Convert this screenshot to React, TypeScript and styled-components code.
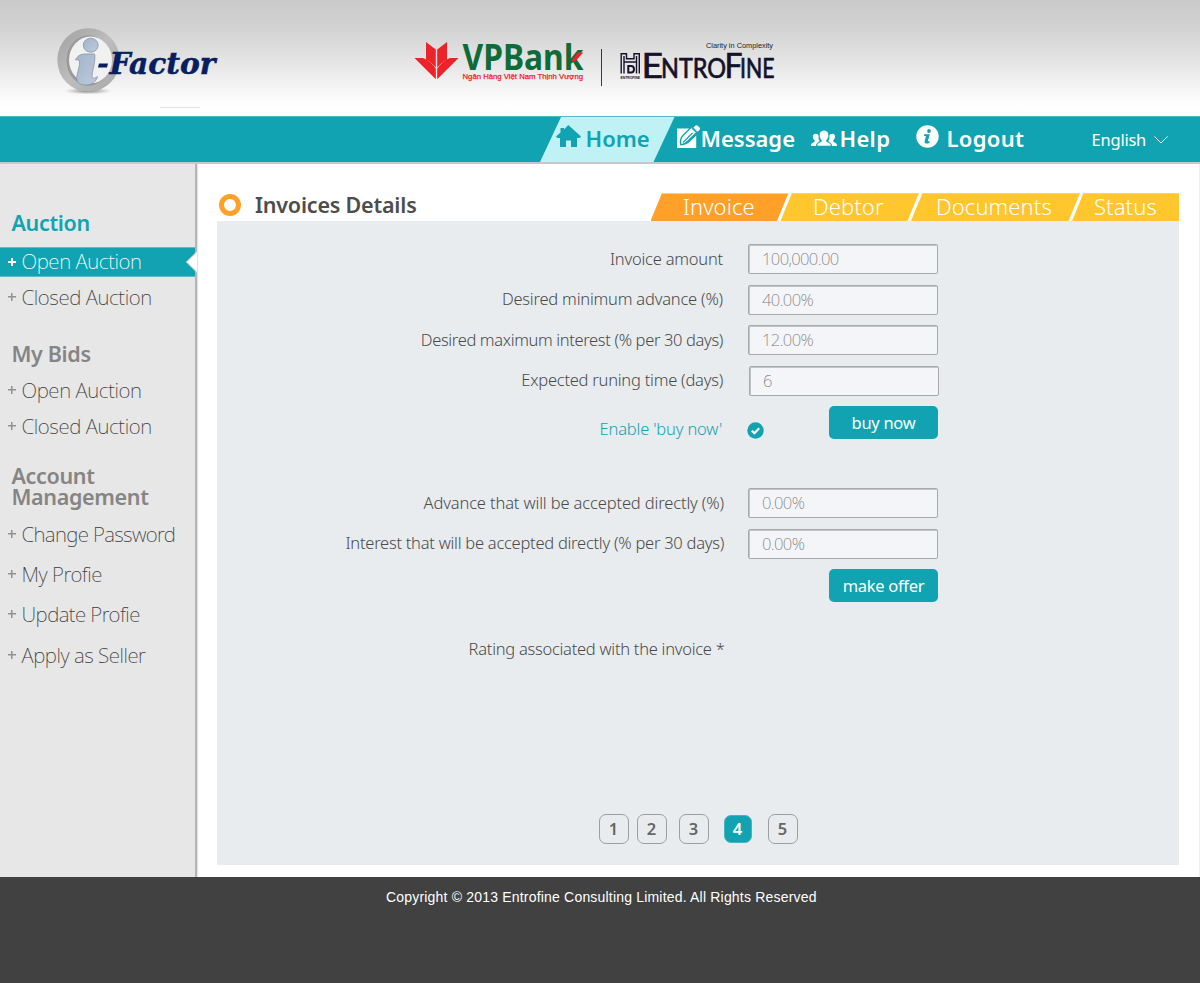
import React from 'react';
import styled, { createGlobalStyle, css } from 'styled-components';

const teal = '#11a3b1';
const thin = `'Noto Sans', 'Open Sans', sans-serif`;

const Global = createGlobalStyle`
  *, *::before, *::after { box-sizing: border-box; }
  body { margin: 0; background: #fff; font-family: ${thin}; }
`;

const Page = styled.div`
  display: flex;
  flex-direction: column;
  width: 1200px;
  height: 983px;
  overflow: hidden;
`;

/* ---------- header ---------- */

const Header = styled.header`
  display: flex;
  flex: none;
  height: 116px;
  padding-left: 50px;
  background: linear-gradient(#cacaca 0, #d3d3d3 30px, #ededed 76px, #fdfdfd 102px, #fff 116px);
  svg { display: block; flex: none; }
`;

const IFactorLogo = styled.svg`
  width: 180px;
  height: 116px;
  margin-right: 180px;
`;

const PartnerLogos = styled.svg`
  width: 380px;
  height: 116px;
`;

/* ---------- navigation ---------- */

const NavBar = styled.nav`
  display: flex;
  flex: none;
  height: 48px;
  padding-left: 540px;
  color: #fff;
  background: ${teal};
  border-top: 1px solid #4cbcc6;
  border-bottom: 2px solid #c6c6c6;
`;

const NavItem = styled.a<{ $w: number; $gap: number; $pad?: number; $ls?: number; $lift?: number; $active?: boolean }>`
  display: flex;
  align-items: center;
  width: ${p => p.$w}px;
  padding: 0 0 3px ${p => p.$pad || 0}px;
  gap: ${p => p.$gap}px;
  font-size: 22px;
  font-weight: 600;
  letter-spacing: ${p => p.$ls || 0}px;
  white-space: nowrap;
  svg { flex: none; margin-bottom: ${p => p.$lift || 0}px; }
  ${p => p.$active && css`
    color: ${teal};
    background: #bff1f5;
    clip-path: polygon(21px 0, 100% 0, calc(100% - 21px) 100%, 0 100%);
  `}
`;

const Language = styled.button`
  display: flex;
  align-items: center;
  gap: 8px;
  margin-left: auto;
  padding: 0 32px 1px 0;
  border: 0;
  background: none;
  color: #fff;
  font: 400 16.5px ${thin};
  letter-spacing: -0.25px;
  svg { margin-top: 2px; }
`;

/* ---------- body ---------- */

const Body = styled.div`
  display: flex;
  flex: none;
  height: 713px;
`;

const Sidebar = styled.aside`
  width: 197px;
  flex: none;
  background: #e7e7e7;
  border-right: 2px solid #b5b5b5;
  box-shadow: 1px 0 1px #e4e4e4;
`;

const Group = styled.section<{ $top: number }>`
  padding-top: ${p => p.$top}px;
`;

const GroupTitle = styled.h2<{ $active?: boolean; $gap: number }>`
  margin: 0 0 ${p => p.$gap}px 11.5px;
  color: ${p => (p.$active ? teal : '#858585')};
  font-size: 21.5px;
  line-height: 20.5px;
  font-weight: 600;
  letter-spacing: -0.35px;
`;

const MenuItem = styled.a<{ $h: number; $ls: number; $active?: boolean }>`
  display: flex;
  align-items: center;
  position: relative;
  height: ${p => p.$h}px;
  padding: 0 0 2px 8px;
  gap: 5.5px;
  color: ${p => (p.$active ? '#fff' : '#3c3c3c')};
  font-size: 20.5px;
  font-weight: 200;
  letter-spacing: ${p => p.$ls}px;
  white-space: nowrap;
  ${p => p.$active && css`
    background: ${teal};
    box-shadow: inset 0 1px #58c0c9, inset 0 -1px #58c0c9;
  `}
`;

const Plus = styled.i<{ $active?: boolean }>`
  width: 8px;
  height: 8px;
  flex: none;
  margin-top: ${p => (p.$active ? 2 : 0)}px;
  background:
    linear-gradient(currentColor, currentColor) center / 8px ${p => (p.$active ? 2 : 1.5)}px no-repeat,
    linear-gradient(currentColor, currentColor) center / ${p => (p.$active ? 2 : 1.5)}px 8px no-repeat;
  color: ${p => (p.$active ? '#fff' : '#929292')};
`;

const Notch = styled.svg`
  position: absolute;
  right: -2px;
  top: 3px;
`;

const Main = styled.main`
  display: flex;
  flex-direction: column;
  flex: 1;
  padding: 29px 20px 0 20px;
  border-right: 1px solid #efefef;
`;

const TitleRow = styled.div`
  display: flex;
  height: 28px;
`;

const Title = styled.h1`
  display: flex;
  align-items: center;
  gap: 14px;
  margin: 0;
  padding: 0 0 5px 2px;
  color: #4d4d4d;
  font-size: 21.5px;
  font-weight: 600;
  letter-spacing: -0.2px;
`;

const Ring = styled.i`
  width: 22px;
  height: 22px;
  margin-top: 1px;
  border: 5px solid #ffa028;
  border-radius: 50%;
`;

const Tabs = styled.div`
  display: flex;
  margin-left: auto;
`;

const Tab = styled.a<{ $w: number; $x: number; $active?: boolean; $last?: boolean }>`
  width: ${p => p.$w}px;
  height: 28px;
  padding-left: ${p => p.$x}px;
  margin-left: -8.5px;
  color: #fff;
  background: ${p => (p.$active ? '#ffa028' : '#ffc62d')};
  box-shadow: inset 0 1px #ffd36b;
  font-size: 22px;
  font-weight: 350;
  line-height: 27px;
  letter-spacing: 0.1px;
  white-space: nowrap;
  clip-path: polygon(11.5px 0, calc(100% - ${p => (p.$last ? 0 : 0.5)}px) 0, ${p => (p.$last ? '100%' : 'calc(100% - 12px)')} 100%, 0 100%);
`;

const Panel = styled.form`
  display: flex;
  flex-direction: column;
  height: 644px;
  padding-top: 23px;
  background: #e8ecef;
`;

const Row = styled.div<{ $mb?: number; $fieldShift?: number; $labelShift?: number }>`
  display: grid;
  grid-template-columns: ${p => 506 + (p.$labelShift || 0)}px 190px;
  column-gap: ${p => 25 + (p.$fieldShift || 0) - (p.$labelShift || 0)}px;
  align-items: center;
  height: 30px;
  margin-bottom: ${p => p.$mb ?? 10.5}px;
`;

const Label = styled.label<{ $teal?: boolean; $ls?: number }>`
  padding-bottom: 2px;
  color: ${p => (p.$teal ? teal : '#4a4a4a')};
  font-size: 16.5px;
  font-weight: 300;
  letter-spacing: ${p => p.$ls ?? -0.36}px;
  text-align: right;
  white-space: nowrap;
`;

const Field = styled.input`
  width: 190px;
  height: 30px;
  padding: 0 12px 1px 13px;
  border: 1px solid #a9a9a9;
  border-radius: 2px;
  background: #f4f5f8;
  box-shadow: inset 1px 1px #c3c4c6;
  color: #777;
  font: 200 16.5px ${thin};
  letter-spacing: -0.58px;
  outline: 0;
`;

const ActionRow = styled.div<{ $mb: number }>`
  display: grid;
  grid-template-columns: 505px 82px 109px;
  align-items: center;
  height: 33px;
  margin-bottom: ${p => p.$mb}px;
  > svg { margin: 15px 0 0 25px; }
  > label { padding-top: 14px; }
`;

const Button = styled.button`
  grid-column: 3;
  height: 33px;
  width: 109px;
  margin-left: 25px;
  padding: 0 0 1px;
  border: 0;
  border-radius: 5px;
  background: ${teal};
  color: #fff;
  font: 400 16.5px ${thin};
  letter-spacing: -0.3px;
  white-space: nowrap;
`;

const Pager = styled.div`
  display: flex;
  align-items: center;
  height: 30px;
  margin: auto 0 21px 382px;
`;

const PageNo = styled.a<{ $gap?: number; $active?: boolean }>`
  display: flex;
  align-items: center;
  justify-content: center;
  width: ${p => (p.$active ? 28 : 30)}px;
  height: ${p => (p.$active ? 28 : 30)}px;
  margin-left: ${p => p.$gap || 0}px;
  padding: 0 1px 1px 0;
  border: ${p => (p.$active ? '1px solid #45b6c1' : '1px solid #9c9fa1')};
  border-radius: 7px;
  background: ${p => (p.$active ? teal : 'transparent')};
  color: ${p => (p.$active ? '#fff' : '#666')};
  font-size: 16.5px;
  font-weight: 600;
`;

const Footer = styled.footer`
  flex: 1;
  padding: 12px 0 0 386px;
  background: #414141;
  color: #fff;
  font: 14px/17px 'Liberation Sans', Arial, sans-serif;
  letter-spacing: 0.19px;
`;

/* ---------- drawings ---------- */

const FactorMark = () => (
  <IFactorLogo viewBox="50 0 180 116">
    <defs>
      <linearGradient id="ring" x1="0" y1="0" x2="1" y2="1">
        <stop offset="0" stopColor="#a0a0a0" />
        <stop offset=".5" stopColor="#bdbdbd" />
        <stop offset="1" stopColor="#a8a8a8" />
      </linearGradient>
      <linearGradient id="glyph" x1="0" y1="0" x2="1" y2="1">
        <stop offset="0" stopColor="#a3b3c9" />
        <stop offset="1" stopColor="#bccbdd" />
      </linearGradient>
      <radialGradient id="ground">
        <stop offset="0" stopColor="#555" stopOpacity=".8" />
        <stop offset="1" stopColor="#999" stopOpacity="0" />
      </radialGradient>
    </defs>
    <ellipse cx="88" cy="91" rx="24" ry="3.5" fill="url(#ground)" />
    <ellipse cx="88.5" cy="60" rx="31.2" ry="31.8" fill="url(#ring)" />
    <ellipse cx="88.500" cy="60.500" rx="22" ry="25.200" fill="#999" />
    <ellipse cx="90.500" cy="60" rx="21.500" ry="23.500" fill="#f1f1f1" />
    <ellipse cx="90.700" cy="45.200" rx="7.400" ry="7" fill="url(#glyph)" stroke="#8494ab" strokeWidth=".8" />
    <path d="M75.500 60c2-4.500 5.500-6 10-6h9c1.500 5-1.500 14-2.500 21.500-.3 3 2.500 3.500 5.500 1-1.500 5.500-6 8.500-12 8.500-8 0-9.500-4.500-8.500-9.500 1-5 3-10.500 2.500-14-.5-2-2.500-2-4-1.500z" fill="url(#glyph)" stroke="#8494ab" strokeWidth=".8" />
    <g fontFamily="'DejaVu Serif', serif" fontWeight="700" fontStyle="italic" fontSize="29">
      <path d="M99 63.500h9l-1 4h-9z" fill="#06205f" />
      <text x="109.500" y="74" textLength="106" lengthAdjust="spacingAndGlyphs" fill="#06205f" stroke="#06205f" strokeWidth=".5">Factor</text>
    </g>
    <path d="M160 107.500h40" stroke="#e3e3e3" />
  </IFactorLogo>
);

const Partners = () => (
  <PartnerLogos viewBox="410 0 380 116">
    <g fill="#ee2329">
      <path d="M426 42l9.800 7.500v18.300c-2.500-3.300-5.500-6-9.800-8.300z" />
      <path d="M447 42l-9.800 7.500v18.300c2.500-3.300 5.500-6 9.800-8.300z" />
      <path d="M414.500 58h8.500c5.500 2 9.500 6 12.800 10.800v10.400z" />
      <path d="M458.500 58h-8.500c-5.500 2-9.500 6-12.800 10.800v10.400z" />
    </g>
    <text x="462.500" y="69.800" textLength="121" lengthAdjust="spacingAndGlyphs" fontFamily="'Noto Sans', sans-serif" fontWeight="700" fontSize="35.500" fill="#0f6b38">VPBank</text>
    <path d="M571.300 60.500l6.500-8h5.500l-8.500 9.500z" fill="#ee2329" />
    <text x="462.500" y="79" textLength="120.500" lengthAdjust="spacingAndGlyphs" fontFamily="'Liberation Sans', sans-serif" fontSize="8" fill="#ee2329" stroke="#ee2329" strokeWidth=".25">Ngân Hàng Việt Nam Thịnh Vượng</text>
    <path d="M601.500 49v37" stroke="#3a3a3a" />
    <text x="706" y="48" textLength="67" lengthAdjust="spacingAndGlyphs" fontFamily="'Liberation Sans', sans-serif" fontSize="7.500" fill="#222">Clarity in Complexity</text>
    <g fill="none" stroke="#14122a" strokeWidth="1.400">
      <path d="M621.200 73.500V53.800h5.300v5h7.500v-5h5.300v19.700" />
      <path d="M624 73.500V56M636.500 73.500V56M624 62h12.500" />
      <path d="M628.300 66h2.700c4 0 4 6.500 0 6.500h-2.700z" strokeWidth="2" />
    </g>
    <text x="620.500" y="78.500" textLength="19.500" lengthAdjust="spacingAndGlyphs" fontFamily="'Liberation Sans', sans-serif" fontWeight="700" fontSize="4.200" fill="#14122a">ENTROFINE</text>
    <g fontFamily="Lato, sans-serif" fill="#14122a" stroke="#14122a" strokeWidth=".7">
      <text x="641.500" y="78.300" textLength="21.500" lengthAdjust="spacingAndGlyphs" fontSize="34.500">E</text>
      <text x="661" y="78.300" textLength="65" lengthAdjust="spacingAndGlyphs" fontSize="26">NTRO</text>
      <text x="724.500" y="78.300" textLength="18" lengthAdjust="spacingAndGlyphs" fontSize="34.500">F</text>
      <text x="740" y="78.300" textLength="34.500" lengthAdjust="spacingAndGlyphs" fontSize="26">INE</text>
    </g>
  </PartnerLogos>
);

const HomeIcon = () => (
  <svg width="25" height="23" viewBox="0 0 25 23" fill={teal}>
    <path d="M12.300 0L25 11.600 23.600 13H21v9h-6v-6.500h-5V22H4v-9H1.400L0 11.600 4.500 7.500V3h3.500v1.500z" />
  </svg>
);

const EditIcon = () => (
  <svg width="24" height="24" viewBox="0 0 24 24">
    <path d="M0 3.500h19.200V23H0z" fill="#fff" />
    <path d="M3.300 20.500c-1.300-4-.5-7.500 2.200-10.500L14.500 1 19 0l4.500 4-1.500 4-9 8.500c-2.500 2.500-5.200 3.700-9.700 4z" fill={teal} />
    <path d="M4.500 19c-.8-3.500 0-6 2.200-8.300l8.300-8.200 4.500 4.300-8.500 8.200c-2 2-3.500 3.300-6.500 4z" fill="#fff" />
    <path d="M16.500 2.500L18.300.8c.8-.8 1.700-.6 2.400 0l1.800 1.800c.7.800.7 1.600 0 2.400L20.500 6.700z" fill="#fff" />
    <path d="M14.800 3.200l4.200 4M6 17.500l9.500-9.500" fill="none" stroke={teal} strokeWidth="1.100" />
  </svg>
);

const PeopleIcon = () => (
  <svg width="26" height="17" viewBox="0 0 26 17" fill="#fff">
    <path d="M0 16c0-2.500 1-3.300 3.300-4.100.7-.3.700-1 .2-1.600C1 7.500 1.500 3.800 4.700 3.800c1.700 0 2.600.8 3 2.200-.5 2 0 3.600 1 5-.7 1.300-3.500 1.500-3.700 5z" />
    <path d="M26 16c0-2.500-1-3.300-3.300-4.100-.7-.3-.7-1-.2-1.600 2.500-2.800 2-6.500-1.200-6.500-1.700 0-2.600.8-3 2.200.5 2 0 3.600-1 5 .7 1.300 3.500 1.500 3.700 5z" />
    <path d="M6 16c0-2.500 1.200-3.200 4-4.200.8-.4.800-1 .2-1.700C7 6 8.300.3 13 .3s6 5.700 2.800 9.800c-.6.700-.6 1.300.2 1.700 2.800 1 4 1.700 4 4.200z" stroke={teal} strokeWidth=".5" />
  </svg>
);

const InfoIcon = () => (
  <svg width="23" height="23" viewBox="0 0 23 23">
    <circle cx="11.500" cy="11.500" r="11.200" fill="#fff" />
    <circle cx="13" cy="6" r="1.900" fill={teal} />
    <path d="M8.200 9.300h5.600l-1.900 7h1.900l-.6 1.700c-2.500 1-5.200.7-4.500-2l1.300-4.900H7.900z" fill={teal} />
  </svg>
);

const CheckIcon = () => (
  <svg width="17" height="17" viewBox="0 0 17 17">
    <circle cx="8.500" cy="8.500" r="8.200" fill={teal} />
    <path d="M4.800 8.800l2.600 2.500 4.800-5" fill="none" stroke="#fff" strokeWidth="2.200" />
  </svg>
);

const Item = ({ text, h, ls = -0.4, active }: { text: string; h: number; ls?: number; active?: boolean }) => (
  <MenuItem $h={h} $ls={ls} $active={active}>
    <Plus $active={active} />
    {text}
    {active && (
      <Notch width="12" height="24" viewBox="0 0 12 24">
        <path d="M12 1.500L1 12l11 10.500z" fill="#fff" />
        <path d="M11 2.500L1.500 12l9.500 9.500" fill="none" stroke="#b9c4c5" strokeWidth="1" />
      </Notch>
    )}
  </MenuItem>
);

export default function App() {
  return (
    <Page>
      <Global />
      <Header>
        <FactorMark />
        <Partners />
      </Header>
      <NavBar>
        <NavItem $w={134.5} $pad={16} $gap={4.5} $lift={4} $active><HomeIcon />Home</NavItem>
        <NavItem $w={136} $pad={2} $gap={0} $lift={3}><EditIcon />Message</NavItem>
        <NavItem $w={105} $gap={3} $ls={0.3}><PeopleIcon />Help</NavItem>
        <NavItem $w={120} $gap={8} $ls={0.3} $lift={4}><InfoIcon />Logout</NavItem>
        <Language>
          English
          <svg width="14" height="8" viewBox="0 0 14 8"><path d="M.5.5L7 7 13.500.5" fill="none" stroke="#fff" /></svg>
        </Language>
      </NavBar>
      <Body>
        <Sidebar>
          <Group $top={49}>
            <GroupTitle $gap={13.5} $active>Auction</GroupTitle>
            <Item text="Open Auction" h={30} active />
            <Item text="Closed Auction" h={41} />
          </Group>
          <Group $top={26}>
            <GroupTitle $gap={8}>My Bids</GroupTitle>
            <Item text="Open Auction" h={36} />
            <Item text="Closed Auction" h={36} />
          </Group>
          <Group $top={21.5}>
            <GroupTitle $gap={7.5}>Account<br />Management</GroupTitle>
            <Item text="Change Password" h={40.3} ls={-0.63} />
            <Item text="My Profie" h={40.3} ls={-0.47} />
            <Item text="Update Profie" h={40.3} ls={-0.56} />
            <Item text="Apply as Seller" h={40.3} ls={-0.46} />
          </Group>
        </Sidebar>
        <Main>
          <TitleRow>
            <Title><Ring />Invoices Details</Title>
            <Tabs>
              <Tab $w={138.5} $x={32.5} $active>Invoice</Tab>
              <Tab $w={139} $x={32.5}>Debtor</Tab>
              <Tab $w={169.5} $x={25}>Documents</Tab>
              <Tab $w={107} $x={22} $last>Status</Tab>
            </Tabs>
          </TitleRow>
          <Panel>
            <Row><Label $ls={-0.22}>Invoice amount</Label><Field defaultValue="100,000.00" /></Row>
            <Row><Label $ls={-0.21}>Desired minimum advance (%)</Label><Field defaultValue="40.00%" /></Row>
            <Row><Label>Desired maximum interest (% per 30 days)</Label><Field defaultValue="12.00%" /></Row>
            <Row $fieldShift={1} $mb={7.5}><Label $ls={-0.24}>Expected runing time (days)</Label><Field defaultValue="6" /></Row>
            <ActionRow $mb={52}><Label $teal $ls={-0.18}>Enable 'buy now'</Label><CheckIcon /><Button type="button">buy now</Button></ActionRow>
            <Row $labelShift={1}><Label $ls={-0.14}>Advance that will be accepted directly (%)</Label><Field defaultValue="0.00%" /></Row>
            <Row $labelShift={1}><Label $ls={-0.26}>Interest that will be accepted directly (% per 30 days)</Label><Field defaultValue="0.00%" /></Row>
            <ActionRow $mb={32}><Button type="button">make offer</Button></ActionRow>
            <Row $labelShift={1.5}><Label $ls={-0.27}>Rating associated with the invoice *</Label></Row>
            <Pager>
              <PageNo>1</PageNo>
              <PageNo $gap={8}>2</PageNo>
              <PageNo $gap={12}>3</PageNo>
              <PageNo $gap={15} $active>4</PageNo>
              <PageNo $gap={16}>5</PageNo>
            </Pager>
          </Panel>
        </Main>
      </Body>
      <Footer>Copyright © 2013 Entrofine Consulting Limited. All Rights Reserved</Footer>
    </Page>
  );
}
